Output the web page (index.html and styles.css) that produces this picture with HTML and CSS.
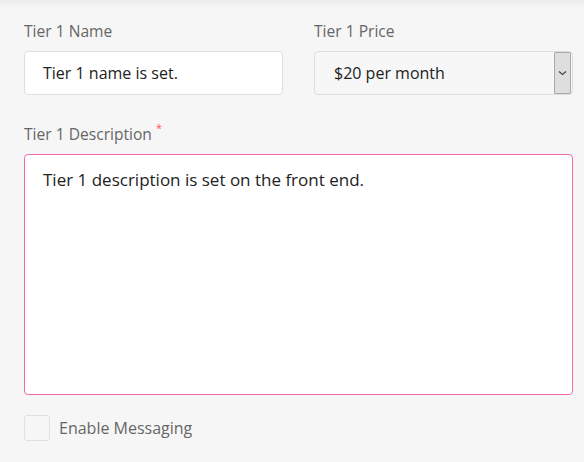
FILE: index.html
```html
<!DOCTYPE html>
<html>
<head>
<meta charset="utf-8">
<link rel="stylesheet" href="styles.css">
</head>
<body>
<div class="page">
  <div class="row">
    <div class="field">
      <label class="label">Tier 1 Name</label>
      <div class="input">Tier 1 name is set.</div>
    </div>
    <div class="field">
      <label class="label">Tier 1 Price</label>
      <div class="select">
        <span class="select-text">$20 per month</span>
        <span class="select-btn">
          <svg width="9" height="6" viewBox="0 0 9 6"><path d="M1 1.5 L4.5 4.5 L8 1.5" fill="none" stroke="#444" stroke-width="1.2"/></svg>
        </span>
      </div>
    </div>
  </div>
  <div class="field full">
    <label class="label">Tier 1 Description<span class="req">*</span></label>
    <div class="textarea">Tier 1 description is set on the front end.</div>
  </div>
  <div class="check-row">
    <span class="checkbox"></span>
    <span class="check-label">Enable Messaging</span>
  </div>
</div>
</body>
</html>
```
FILE: styles.css
```css
html, body {
  margin: 0;
  padding: 0;
}
body {
  background: #f6f6f6;
  font-family: "Open Sans", "Noto Sans", sans-serif;
  width: 584px;
  height: 462px;
  overflow: hidden;
}
.page {
  padding: 21px 11px 0 24px;
  background: linear-gradient(#ececec, #f6f6f6 8px);
  height: 462px;
  box-sizing: border-box;
}
.row {
  display: flex;
  gap: 31px;
}
.row .field {
  width: 259px;
}
.label {
  display: block;
  color: #666;
  font-size: 15.6px;
  line-height: 20px;
  margin-bottom: 10px;
}
.input {
  height: 44px;
  box-sizing: border-box;
  background: #fff;
  border: 1px solid #dedede;
  border-radius: 4px;
  padding: 0 18px;
  display: flex;
  align-items: center;
  font-size: 16px;
  color: #222;
}
.select {
  height: 44px;
  box-sizing: border-box;
  background: #f7f7f7;
  border: 1px solid #dedede;
  border-radius: 4px;
  display: flex;
  align-items: center;
  font-size: 16px;
  color: #222;
}
.select-text {
  flex: 1;
  padding-left: 19px;
}
.select-btn {
  width: 15px;
  height: 40px;
  margin-right: 1px;
  background: #dedede;
  border: 1px solid #aaa;
  border-radius: 1px;
  display: flex;
  align-items: center;
  justify-content: center;
}
.full {
  margin-top: 29px;
}
.req {
  color: #f55;
  font-size: 11px;
  vertical-align: top;
  position: relative;
  top: -6px;
  margin-left: 4px;
}
.textarea {
  height: 241px;
  box-sizing: border-box;
  background: #fff;
  border: 1px solid #f06aae;
  border-radius: 4px;
  padding: 13px 18px;
  font-size: 17px;
  line-height: 24px;
  color: #222;
}
.check-row {
  display: flex;
  align-items: center;
  margin-top: 20px;
}
.checkbox {
  width: 26px;
  height: 26px;
  box-sizing: border-box;
  border: 1px solid #e0e0e0;
  border-radius: 3px;
  margin-right: 9px;
}
.check-label {
  font-size: 16px;
  color: #666;
}
```
